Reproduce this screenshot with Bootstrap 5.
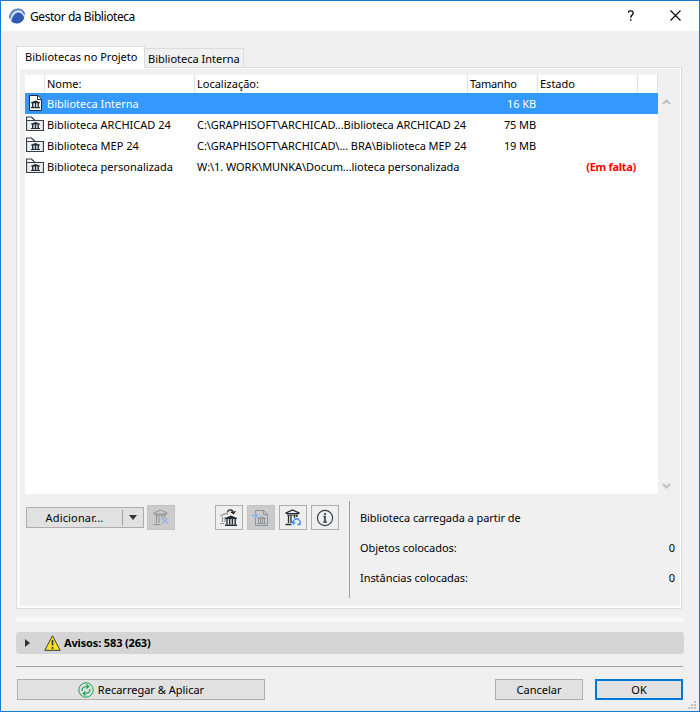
<!DOCTYPE html>
<html lang="pt">
<head>
<meta charset="utf-8">
<title>Gestor da Biblioteca</title>
<link rel="stylesheet" href="https://cdn.jsdelivr.net/npm/bootstrap@5.3.0/dist/css/bootstrap.min.css">
<style>
body{font:11px/15px "Noto Sans","Open Sans",sans-serif;color:#000;background:#f0f0f0}
.window{width:700px;height:712px;border:1px solid #1979ca;background:#f0f0f0}
.titlebar{height:30px;font-size:12px;padding:0 18px 0 8px}
.title-text{margin-left:5px;letter-spacing:-.43px}
.tabs{height:21px;margin:15px 0 0 15px}
.tab-on{height:22px;width:129px;border:1px solid #dcdcdc;border-bottom:0;background:#fff;padding:2px 0 0 8px;z-index:1;margin-bottom:-1px}
.tab-off{height:19px;width:99px;border:1px solid #dcdcdc;border-left:0;border-bottom:0;padding:2px 0 0 3px}
.panel{width:666px;height:542px;margin-left:15px;border:1px solid #dcdcdc;background:#fff;padding:1px 1px 2px 3px}
.panel-in{height:537px;background:#f0f0f0;padding:6px 0 0 5px}
.lib{width:633px;height:419px;background:#fff}
.lrow{display:grid;grid-template-columns:20px 150px 273px 70px 100px 20px;height:21px;white-space:nowrap}
.lrow>div{padding:3px 1px 0 2px}
.lrow>div.text-end{padding-right:2px}
.lrow>div:first-child{padding:0 0 0 1px}
.lhead{height:18px}
.lhead>div{border-right:1px solid #e0e0e0;padding-top:1px}
.loc{letter-spacing:-.06px}
.size-head{letter-spacing:-.2px}
.size{letter-spacing:-.1px}
.folder{margin-top:2px}
.sel{background:#3399ff;color:#fff}
.missing{color:#f00;font-weight:700;letter-spacing:-.3px}
.scroll{width:17px;height:419px;padding:22px 0 3px}
.tools{padding:7px 0 0 1px;height:103px}
.wbtn{background:#e1e1e1;border:1px solid #adadad;height:21px}
.add{width:118px;height:21px;margin-top:6px}
.add-text{letter-spacing:.15px}
.arrowcell{width:21px;height:16px;border-left:1px solid #a0a0a0}
.ib{width:28px;height:25px;border:1px solid #adadad;background:#efefef;margin-top:4px}
.ib.off{background:#cbcbcb;border-color:#c3c3c3}
.remove{margin-left:3px}
.toolset{margin-left:40px}
.stats{width:326px;height:97px;border-left:1px solid #a0a0a0;margin-left:10px;padding:9px 0 0 10px;gap:15px;letter-spacing:-.06px}
.strip{height:5px;background:#f7f7f7;margin:8px 15px 0}
.warnbar{height:22px;background:#d5d5d5;border-radius:3px;margin:10px 15px 0;padding-left:9px}
.warn-ico{margin-left:14px}
.warn-text{margin-left:3px;margin-top:-1px;letter-spacing:-.15px}
.rule{height:1px;background:#a0a0a0;margin:12px 16px 0 15px}
.foot{padding:12px 16px 0}
.reload{width:248px}
.dlg{width:88px}
.okb{border:2px solid #0078d7;margin-left:12px}
.grip{right:3px;bottom:2px}
</style>
<script src="https://cdn.jsdelivr.net/npm/bootstrap@5.3.0/dist/js/bootstrap.bundle.min.js"></script>
</head>
<body class="m-0 overflow-hidden">
<svg width="0" height="0" class="position-absolute">
<defs>
<symbol id="fold" viewBox="0 0 18 17"><path d="M.5 14.500V1h5l3.500 3.500" fill="#fff" stroke="#333e48" stroke-width="1.200"/><path d="M.5 4.500h17v10H.5z" fill="#eceef0" stroke="#333e48" stroke-width="1.200"/><path d="m5 7.800 4.500-1.800 4.500 1.800v.7H5zM6 8.500h1.400V12H6zM8.800 8.500h1.400V12H8.800zM11.500 8.500h1.400V12h-1.400zM5 12h9v1H5z" fill="#222c35"/></symbol>
</defs></svg>
<main class="window position-relative overflow-hidden">
  <header class="titlebar bg-white d-flex align-items-center">
    <svg width="16" height="16" viewBox="0 0 16 16"><circle cx="8" cy="8" r="7.500" fill="#b9c8ea"/><path d="M.8 10.500C.8 5 5 1.200 9.500 1.200c3.200 0 5.500 2.600 6 5.300" fill="none" stroke="#4a78cc" stroke-width="1.600"/><path d="M2.300 13.500C3.500 8 6.500 4.500 9.300 4.500c3 0 5 2.500 6 5-.8 3-3.500 5.800-7.300 6-2.300 0-4.200-.7-5.700-2z" fill="#2f5bb5"/><path d="M1.300 12.500C2.500 7 5.500 3.500 9 3.500c2.800 0 5 2.300 6.300 5" fill="none" stroke="#e9effb"/></svg>
    <span class="title-text">Gestor da Biblioteca</span>
    <svg class="ms-auto" width="53" height="12" viewBox="0 0 53 12"><path d="M.2 2.800C.4.200 5.200 0 5.200 2.900 5.200 5 2.700 5.200 2.700 7.800" fill="none" stroke="#000" stroke-width="1.300"/><path d="M2 9.300h1.500v1.500H2z"/><path d="m42.500 .5 10 10m0-10-10 10" stroke="#000" stroke-width="1.100"/></svg>
  </header>
  <nav class="tabs d-flex align-items-end">
    <div class="tab-on position-relative">Bibliotecas no Projeto</div>
    <div class="tab-off">Biblioteca Interna</div>
  </nav>
  <section class="panel"><div class="panel-in">
    <div class="d-flex">
      <div class="lib">
        <div class="lrow lhead"><div></div><div>Nome:</div><div>Localização:</div><div class="size-head">Tamanho</div><div>Estado</div><div></div></div>
        <div class="lrow sel"><div><svg class="d-block" width="18" height="21" viewBox="0 0 18 21"><path d="M3.500 2.500h8.500l3.500 3.500v11.500h-12z" fill="#fff" stroke="#222c35"/><path d="M11.500 2.500v4h4" fill="none" stroke="#222c35"/><path d="m5 9.300 4.500-1.800L14 9.300v.9H5zM6 10h1.400v4H6zM8.800 10h1.400v4H8.800zM11.500 10h1.400v4h-1.400zM5 14h9v1.200H5z" fill="#222c35"/></svg></div><div>Biblioteca Interna</div><div></div><div class="text-end size">16 KB</div><div></div><div></div></div>
        <div class="lrow"><div><svg class="d-block folder" width="18" height="17"><use href="#fold"/></svg></div><div>Biblioteca ARCHICAD 24</div><div class="loc">C:\GRAPHISOFT\ARCHICAD...Biblioteca ARCHICAD 24</div><div class="text-end size">75 MB</div><div></div><div></div></div>
        <div class="lrow"><div><svg class="d-block folder" width="18" height="17"><use href="#fold"/></svg></div><div>Biblioteca MEP 24</div><div class="loc">C:\GRAPHISOFT\ARCHICAD\... BRA\Biblioteca MEP 24</div><div class="text-end size">19 MB</div><div></div><div></div></div>
        <div class="lrow"><div><svg class="d-block folder" width="18" height="17"><use href="#fold"/></svg></div><div>Biblioteca personalizada</div><div class="loc">W:\1. WORK\MUNKA\Docum...lioteca personalizada</div><div></div><div class="missing text-end">(Em falta)</div><div></div></div>
      </div>
      <div class="scroll d-flex flex-column justify-content-between align-items-center">
        <svg width="9" height="9" viewBox="0 0 9 9"><path d="M1 7 4.500 3.500 8 7" fill="none" stroke="#bfbfbf" stroke-width="2"/></svg>
        <svg width="9" height="9" viewBox="0 0 9 9"><path d="m1 2 3.500 3.500L8 2" fill="none" stroke="#bfbfbf" stroke-width="2"/></svg>
      </div>
    </div>
    <div class="tools d-flex align-items-start">
      <div class="wbtn add d-flex align-items-center"><span class="add-text flex-grow-1 text-center">Adicionar...</span><span class="arrowcell d-flex align-items-center justify-content-center"><svg width="8" height="5"><path d="M0 0h8L4 5z" fill="#333"/></svg></span></div>
      <div class="ib off remove d-flex align-items-center justify-content-center"><svg width="18" height="18" viewBox="0 0 18 18" fill="none" stroke="#8d9297"><path d="M2 5V4l6.500-3L15 4v1zM3 6h11M4.500 6v8M7 6v8M10 6v4M12.500 6v3M1.500 15.500h7"/><path d="m10 9 5.500 5.500m0-5.500L10 14.500" stroke="#94b4ec" stroke-width="1.500"/></svg></div>
      <div class="d-flex gap-1 toolset">
        <div class="ib d-flex align-items-center justify-content-center"><svg width="18" height="18" viewBox="0 0 18 18" fill="none"><path d="M1 7.500 1 6.500 6 4.500l2 1M2.500 8v5M5 8v5M0 14.500h4.500" stroke="#8d9297" stroke-width="1.200"/><path d="M5 10V9l6-2.500L17 9v1zM5 15.500h12V17H5z" fill="#222c35"/><path d="M7 9.500v6M9.700 9.500v6M12.400 9.500v6M15.200 9.500v6" stroke="#222c35" stroke-width="1.400"/><path d="M7.500 3.500C8 0 13 0 13.500 4M10.800 2.700l2.700 2 2-2.700" stroke="#222c35" stroke-width="1.200"/></svg></div>
        <div class="ib off d-flex align-items-center justify-content-center"><svg width="18" height="18" viewBox="0 0 18 18" fill="none" stroke="#8d9297"><path d="M3.500 4V1.500h8l4 4v11h-12V9M11.500 1.500v4h4"/><path d="m5.500 9.500 4-1.800 4 1.800zM6.500 10v4M8.500 10v4M10.500 10v4M12.500 10v4M5 14.500h9"/><path d="M0 6.500h5M3 4l2.500 2.500L3 9" stroke="#84aff4" stroke-width="1.300"/></svg></div>
        <div class="ib d-flex align-items-center justify-content-center"><svg width="18" height="18" viewBox="0 0 18 18" fill="none" stroke="#222c35"><path d="M2 4.500V4L8.500 1 15 4v.500zM3 6h11" stroke-width="1.200"/><path d="M4.500 6v8M7 6v8M10.500 6v3M12.800 6v2M1.500 15.500h6" stroke-width="1.300"/><path d="M10 15.500a3.400 3.400 0 1 1 5.300 0M7.800 12.500l1.500 2 2-1.200M13.500 15.500h3" stroke="#3385ff" stroke-width="1.300"/></svg></div>
        <div class="ib d-flex align-items-center justify-content-center"><svg width="18" height="18" viewBox="0 0 18 18" fill="none" stroke="#333e48"><circle cx="9" cy="9" r="7.600" stroke-width="1.200"/><path d="M9 4v2M7.500 7.700H9v5M7.200 13h3.600" stroke-width="1.700"/></svg></div>
      </div>
      <div class="stats d-flex flex-column">
        <div>Biblioteca carregada a partir de</div>
        <div class="d-flex justify-content-between"><span>Objetos colocados:</span><span>0</span></div>
        <div class="d-flex justify-content-between"><span>Instâncias colocadas:</span><span>0</span></div>
      </div>
    </div>
  </div></section>
  <div class="strip"></div>
  <div class="warnbar d-flex align-items-center fw-bold">
    <svg width="5" height="8"><path d="M0 0v8l5-4z" fill="#333"/></svg>
    <svg class="warn-ico" width="17" height="16" viewBox="0 0 17 16"><path d="M8.500 .8 16.200 15.300H.8z" fill="#ffe11b" stroke="#333e48" stroke-linejoin="round"/><path d="M8.500 5v5.500M8.500 12v2" stroke="#333e48" stroke-width="1.700"/></svg>
    <span class="warn-text">Avisos: 583 (263)</span>
  </div>
  <div class="rule"></div>
  <footer class="foot d-flex">
    <div class="wbtn reload d-flex align-items-center justify-content-center gap-1"><svg width="16" height="16" viewBox="0 0 16 16" fill="none" stroke="#16a34f"><circle cx="8" cy="8" r="7.200"/><path d="M4.200 9V7.500C4.200 5.500 6 4.500 10.500 4.500M8.500 2.500l2.200 2-2.200 2M11.800 7v1.500c0 2-1.800 3-6.300 3M7.500 9.500l-2.200 2 2.200 2" stroke-width="1.200"/></svg><span>Recarregar &amp; Aplicar</span></div>
    <div class="wbtn dlg ms-auto d-flex align-items-center justify-content-center">Cancelar</div>
    <div class="wbtn dlg okb d-flex align-items-center justify-content-center">OK</div>
  </footer>
  <svg class="grip position-absolute" width="8" height="8" fill="#bfbfbf"><path d="M6 0h2v2H6zM3 3h2v2H3zM6 3h2v2H6zM0 6h2v2H0zM3 6h2v2H3zM6 6h2v2H6z"/></svg>
</main>
</body>
</html>
